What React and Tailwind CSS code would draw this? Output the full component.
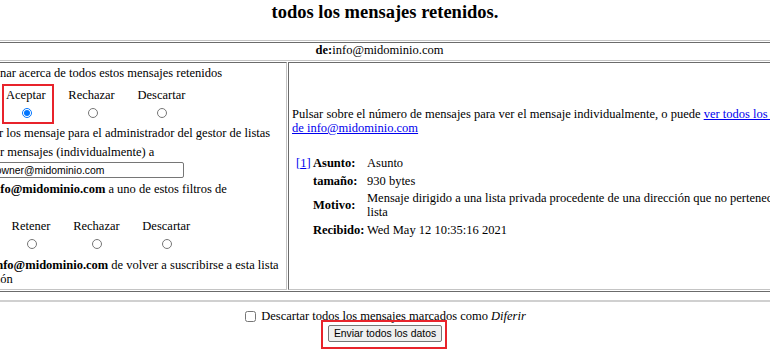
import React from 'react';

// bordes de tabla clásicos (outset / inset)
const tableBorder = 'border border-t-[#c4c4c4] border-l-[#c4c4c4] border-r-[#6b6b6b] border-b-[#6b6b6b]';
const cellBorder = 'border border-t-[#6b6b6b] border-l-[#6b6b6b] border-r-[#c4c4c4] border-b-[#c4c4c4]';

function RadioGroup({ name, options, checked, boxed }) {
  return (
    <div className="flex">
      {options.map(opt => (
        <div key={opt} className="relative flex flex-col items-center px-[11.35px]">
          <span className="leading-[14px]">{opt}</span>
          <input
            type="radio"
            name={name}
            defaultChecked={opt === checked}
            className="mt-[6px] ml-[2px] w-[10px] h-[10px]"
          />
          {opt === boxed && (
            <div className="absolute left-[7px] right-[3px] -top-[4px] -bottom-[6px] border-2 border-[#e8232b]" />
          )}
        </div>
      ))}
    </div>
  );
}

function MessageInfo() {
  return (
    <div className="ml-[4px] mt-[21px] grid grid-cols-[17px_54px_auto] gap-y-[3.5px] leading-[14px]">
      <span className="text-[#0000ee]">[<span className="underline">1</span>]</span>
      <span className="font-bold">Asunto:</span>
      <span>Asunto</span>

      <span />
      <span className="font-bold">tamaño:</span>
      <span>930 bytes</span>

      <span />
      <span className="font-bold self-center">Motivo:</span>
      <span className="whitespace-nowrap">
        Mensaje dirigido a una lista privada procedente de una dirección que no pertenece a la
        <br />
        lista
      </span>

      <span />
      <span className="font-bold">Recibido:</span>
      <span>Wed May 12 10:35:16 2021</span>
    </div>
  );
}

export default function App() {
  return (
    <div className="relative w-[770px] h-[350px] overflow-hidden bg-white text-black text-[12.5px] font-['Liberation_Serif','Times_New_Roman',serif]">
      <h2 className="pt-[2px] text-center text-[18.5px] leading-[21px] font-bold">
        todos los mensajes retenidos.
      </h2>

      {/* tabla principal */}
      <div className={`-ml-[66px] w-[891px] mt-[17px] p-[1px] flex flex-col gap-[1px] ${tableBorder}`}>
        <div className={`h-[19px] text-center leading-[14px] ${cellBorder}`}>
          <b>de:</b>info@midominio.com
        </div>

        <div className="flex gap-[1px] h-[228px]">
          {/* columna izquierda */}
          <div className={`w-[351px] shrink-0 pl-[1px] pt-[3px] whitespace-nowrap leading-[14px] ${cellBorder}`}>
            <div className="ml-[21px]">Determinar acerca de todos estos mensajes retenidos</div>

            <div className="mt-[8px]">
              <RadioGroup
                name="accion"
                options={['Diferir', 'Aceptar', 'Rechazar', 'Descartar']}
                checked="Aceptar"
                boxed="Aceptar"
              />
            </div>

            <div className="mt-[8px] flex items-center h-[14px]">
              <input type="checkbox" className="ml-[5px] mr-[3px] w-[10px] h-[10px]" />
              Preservar los mensaje para el administrador del gestor de listas
            </div>

            <div className="mt-[5px] flex items-center h-[14px]">
              <input type="checkbox" className="ml-[8px] mr-[3px] w-[10px] h-[10px]" />
              Reenviar mensajes (individualmente) a
            </div>

            <input
              type="text"
              defaultValue="mailman-owner@midominio.com"
              className="block mt-[3px] ml-[12px] w-[234px] h-[16px] px-[2px] border border-[#767676] rounded-[2px] text-[10.4px] font-['Liberation_Sans',Arial,sans-serif]"
            />

            <div className="mt-[4px] ml-[14px]">
              Añadir <b>info@midominio.com</b> a uno de estos filtros de
            </div>
            <div>remitentes:</div>

            <div className="mt-[9px]">
              <RadioGroup
                name="filtro"
                options={['Aceptar', 'Retener', 'Rechazar', 'Descartar']}
              />
            </div>

            <div className="mt-[9px] ml-[2px]">
              Prohibir a <b>info@midominio.com</b> de volver a suscribirse a esta lista
            </div>
            <div>de distribución</div>
          </div>

          {/* columna derecha */}
          <div className={`flex-1 pl-[3px] pt-[44px] whitespace-nowrap leading-[14px] ${cellBorder}`}>
            <div>
              Pulsar sobre el número de mensajes para ver el mensaje individualmente, o puede{' '}
              <span className="text-[#0000ee] underline">
                ver todos los mensajes
                <br />
                de info@midominio.com
              </span>
            </div>
            <MessageInfo />
          </div>
        </div>
      </div>

      <div className="mt-[8px] h-[2px] bg-[#d0d0d0]" />

      <div className="mt-[7px] flex flex-col items-center">
        <label className="flex items-center h-[14px] leading-[14px]">
          <input type="checkbox" className="ml-[1px] mr-[5px] w-[11px] h-[11px]" />
          Descartar todos los mensajes marcados como&nbsp;<i>Diferir</i>
        </label>
        <div className="relative mt-[1px]">
          <button className="h-[17px] px-[5px] bg-[#efefef] border border-[#767676] rounded-[2px] text-[10.4px] leading-[13px] font-['Liberation_Sans',Arial,sans-serif]">
            Enviar todos los datos
          </button>
          <div className="absolute -left-[7px] -right-[5px] -top-[4px] -bottom-[6px] border-2 border-[#e8232b]" />
        </div>
      </div>
    </div>
  );
}
